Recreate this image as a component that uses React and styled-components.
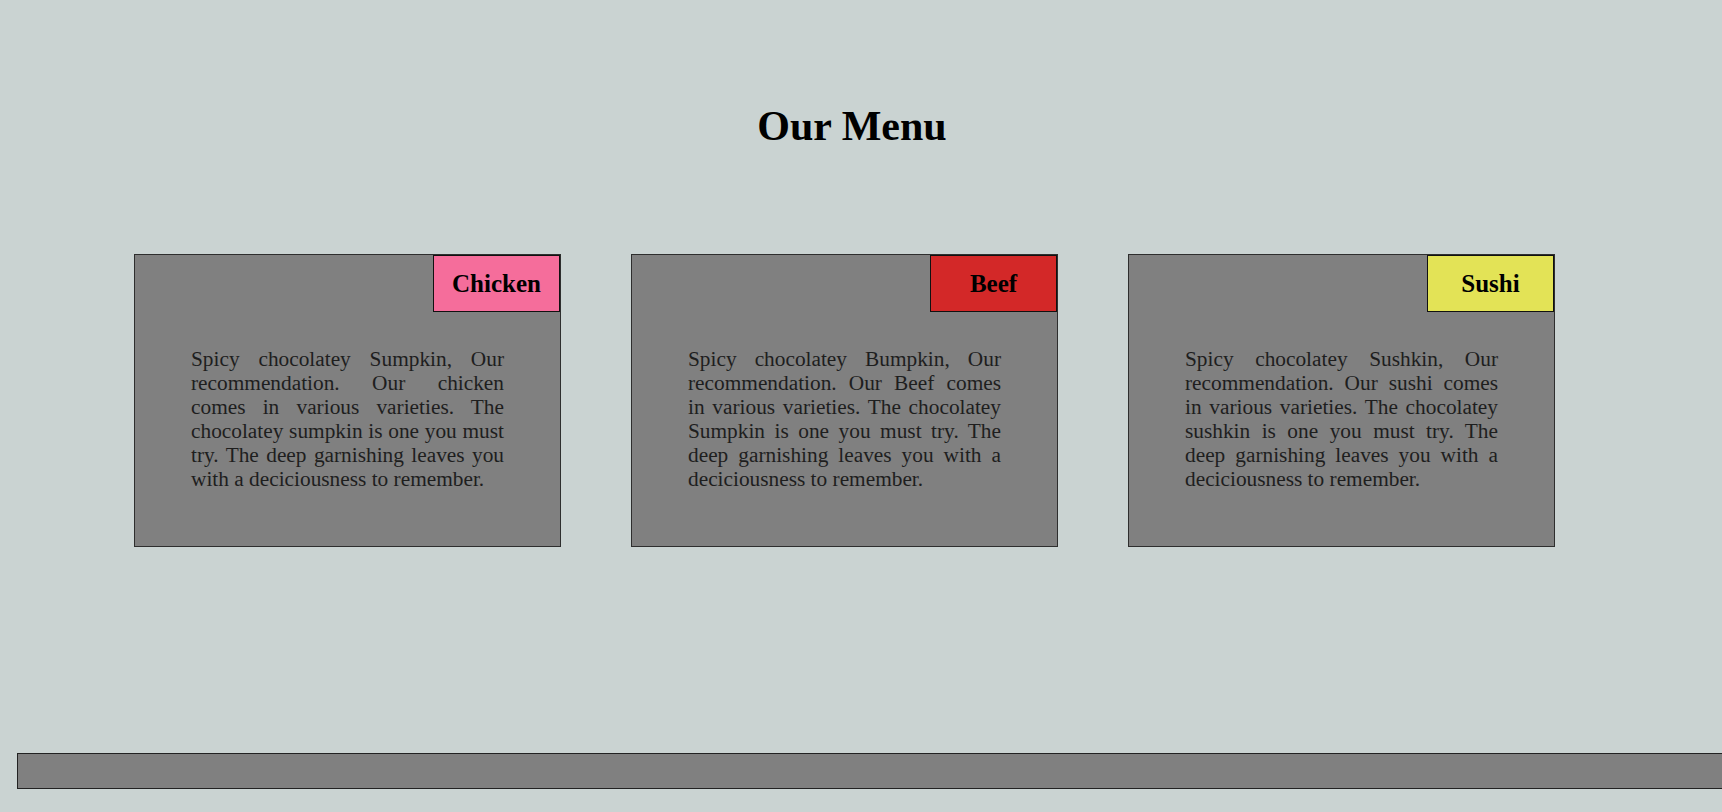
import React from "react";
import styled, { createGlobalStyle } from "styled-components";

const GlobalStyle = createGlobalStyle`
  html, body {
    margin: 0;
    padding: 0;
    background: #cad3d2;
  }
  body {
    font-family: "Liberation Serif", "Times New Roman", serif;
  }
`

const Page = styled.div`
  display: flex;
  flex-direction: column;
  padding-top: 102px;
`

const Title = styled.h1`
  margin: 0;
  padding-right: 18px;
  font-size: 42px;
  line-height: 48px;
  font-weight: bold;
  text-align: center;
  color: #000;
`

const Menu = styled.div`
  display: flex;
  gap: 70px;
  margin-top: 104px;
  padding-left: 134px;
`

const Card = styled.div`
  box-sizing: border-box;
  width: 427px;
  height: 293px;
  display: flex;
  flex-direction: column;
  background: #808080;
  border: 1px solid #2e2e2e;
`

const Label = styled.h2`
  box-sizing: border-box;
  align-self: flex-end;
  width: 127px;
  height: 57px;
  margin: 0;
  display: flex;
  align-items: center;
  justify-content: center;
  background: ${(p) => p.color};
  border: 1px solid #111;
  font-size: 25px;
  font-weight: bold;
  color: #000;
`

const Text = styled.p`
  margin: 35px 0 0;
  padding: 0 56px;
  font-size: 21.33px;
  line-height: 24px;
  text-align: justify;
  color: #1e1e1e;
`

const Footer = styled.footer`
  box-sizing: border-box;
  width: 100%;
  height: 36px;
  margin-top: 206px;
  margin-left: 17px;
  background: #808080;
  border: 1px solid #222;
  border-right: none;
`

const dishes = [
  {
    name: "Chicken",
    color: "#f56d9b",
    text: "Spicy chocolatey Sumpkin, Our recommendation. Our chicken comes in various varieties. The chocolatey sumpkin is one you must try. The deep garnishing leaves you with a deciciousness to remember.",
  },
  {
    name: "Beef",
    color: "#d32828",
    text: "Spicy chocolatey Bumpkin, Our recommendation. Our Beef comes in various varieties. The chocolatey Sumpkin is one you must try. The deep garnishing leaves you with a deciciousness to remember.",
  },
  {
    name: "Sushi",
    color: "#e3e356",
    text: "Spicy chocolatey Sushkin, Our recommendation. Our sushi comes in various varieties. The chocolatey sushkin is one you must try. The deep garnishing leaves you with a deciciousness to remember.",
  },
];

function App() {
  return (
    <>
      <GlobalStyle />
      <Page>
        <Title>Our Menu</Title>
        <Menu>
          {dishes.map((d) => (
            <Card key={d.name}>
              <Label color={d.color}>{d.name}</Label>
              <Text>{d.text}</Text>
            </Card>
          ))}
        </Menu>
        <Footer />
      </Page>
    </>
  );
}

export default App;
